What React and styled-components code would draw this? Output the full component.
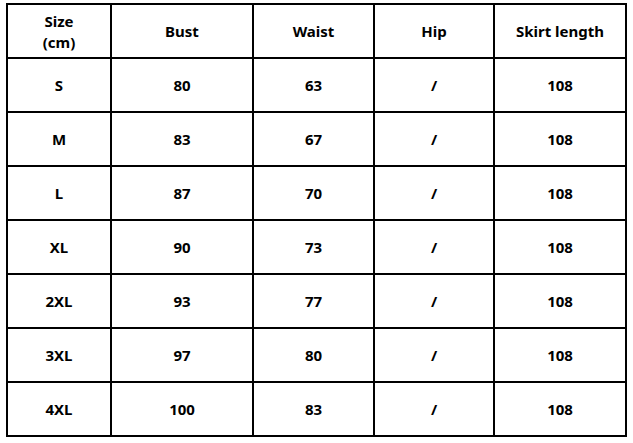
import React from 'react';
import styled, { createGlobalStyle } from 'styled-components';

const GlobalStyle = createGlobalStyle`
  body {
    margin: 0;
    background: #ffffff;
  }
`;

const Page = styled.div`
  padding: 3px 0 0 6px;
  width: 633px;
  height: 443px;
  box-sizing: border-box;
  background: #fff;
`;

const Grid = styled.div`
  display: grid;
  grid-template-columns: 104px 142px 121px 120px 132px;
  grid-auto-rows: 54px;
  width: max-content;
  border-top: 2px solid #000;
  border-left: 2px solid #000;
  font-family: "Noto Sans", "Open Sans", sans-serif;
  font-weight: 700;
  font-size: 15px;
  color: #000;
`;

const Cell = styled.div`
  box-sizing: border-box;
  border-right: 2px solid #000;
  border-bottom: 2px solid #000;
  display: flex;
  align-items: center;
  justify-content: center;
  text-align: center;
  line-height: ${(p) => (p.$tight ? '21px' : '1')};
  padding-top: 1px;
`;

const headers = ['Size', 'Bust', 'Waist', 'Hip', 'Skirt length'];

const rows = [
  ['S', '80', '63', '/', '108'],
  ['M', '83', '67', '/', '108'],
  ['L', '87', '70', '/', '108'],
  ['XL', '90', '73', '/', '108'],
  ['2XL', '93', '77', '/', '108'],
  ['3XL', '97', '80', '/', '108'],
  ['4XL', '100', '83', '/', '108'],
];

export default function App() {
  return (
    <Page>
      <GlobalStyle />
      <Grid>
        {headers.map((h, i) => (
          <Cell key={'h' + i} $tight={i === 0}>
            {i === 0 ? (
              <span>
                Size
                <br />
                (cm)
              </span>
            ) : (
              h
            )}
          </Cell>
        ))}
        {rows.map((r, ri) =>
          r.map((c, ci) => <Cell key={ri + '-' + ci}>{c}</Cell>)
        )}
      </Grid>
    </Page>
  );
}
